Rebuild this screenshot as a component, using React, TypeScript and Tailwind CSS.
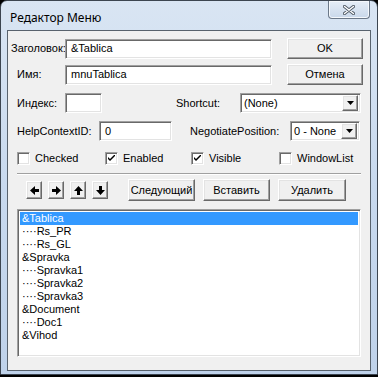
import React from "react";

const font = { fontFamily: '"Liberation Sans", Arial, sans-serif' };

const sunken =
  "border border-t-[#a0a0a0] border-l-[#a0a0a0] border-b-white border-r-white shadow-[inset_1px_1px_0_#696969,inset_-1px_-1px_0_#e3e3e3] bg-white";
const raised =
  "border border-t-white border-l-white border-b-[#696969] border-r-[#696969] shadow-[inset_-1px_-1px_0_#a0a0a0,inset_1px_1px_0_#e3e3e3] bg-[#f0f0f0]";

function TextBox({ w, value }: { w: string; value?: string }) {
  return (
    <div className={`${sunken} ${w} h-[20px] flex items-center pl-[5px] text-[11px] text-black`}>
      {value}
    </div>
  );
}

function Btn({ w, h, children }: { w: string; h: string; children: React.ReactNode }) {
  return (
    <div className={`${raised} ${w} ${h} flex items-center justify-center text-[11px] text-black`}>
      {children}
    </div>
  );
}

function Combo({ w, value }: { w: string; value: string }) {
  return (
    <div className={`${sunken} ${w} h-[20px] flex items-center pl-[3px] pr-[2px] text-[11px] text-black`}>
      <span className="flex-1">{value}</span>
      <div className={`${raised} w-[16px] h-[16px] flex items-center justify-center`}>
        <svg width="7" height="4" viewBox="0 0 7 4">
          <path d="M0 0h7L3.5 4z" fill="#000" />
        </svg>
      </div>
    </div>
  );
}

function Check({ checked, label, w }: { checked?: boolean; label: string; w: string }) {
  return (
    <div className={`flex items-center gap-[5px] ${w}`}>
      <div className={`${sunken} w-[13px] h-[13px] flex items-center justify-center`}>
        {checked && (
          <svg width="7" height="7" viewBox="0 0 7 7">
            <path d="M0 2l2 2 5-5v2l-5 5-2-2z" fill="#000" />
          </svg>
        )}
      </div>
      <span className="text-[11px] text-black">{label}</span>
    </div>
  );
}

function Arrow({ dir }: { dir: "l" | "r" | "u" | "d" }) {
  const rot = { l: "rotate-180", r: "", u: "-rotate-90", d: "rotate-90" }[dir];
  return (
    <div className={`${raised} w-[16px] h-[18px] flex items-center justify-center`}>
      <svg width="9" height="9" viewBox="0 0 9 9" className={rot}>
        <path d="M0 3h4V0l5 4.5L4 9V6H0z" fill="#000" />
      </svg>
    </div>
  );
}

const items = [
  "&Tablica",
  "····Rs_PR",
  "····Rs_GL",
  "&Spravka",
  "····Spravka1",
  "····Spravka2",
  "····Spravka3",
  "&Document",
  "····Doc1",
  "&Vihod",
];

export default function App() {
  return (
    <div className="w-[378px] h-[377px] bg-black" style={font}>
      <div className="w-[378px] h-[375px] rounded-t-[7px] border border-[#3c4550] bg-gradient-to-b from-[#d9e5f3] via-[#c8d9ee] to-[#bfd2ea] flex flex-col">
        {/* title bar */}
        <div className="h-[29px] flex items-start relative">
          <span className="mt-[8px] ml-[9px] text-[12px] text-black" style={{ fontFamily: '"Noto Sans", "Open Sans", sans-serif' }}>
            Редактор Меню
          </span>
          <div className="ml-auto mr-[7px] w-[42px] h-[18px] rounded-b-[4px] border border-t-0 border-[#6b7888] bg-gradient-to-b from-[#e6eef7] to-[#c9d8ea] flex items-center justify-center shadow-[inset_0_0_0_1px_#f4f8fc]">
            <svg width="12" height="10" viewBox="0 0 12 10">
              <path d="M1.5 1.5l9 7M10.5 1.5l-9 7" stroke="#4f5a66" strokeWidth="3.2" strokeLinecap="round" />
              <path d="M1.5 1.5l9 7M10.5 1.5l-9 7" stroke="#ffffff" strokeWidth="1.4" strokeLinecap="round" />
            </svg>
          </div>
        </div>

        {/* client */}
        <div className="mx-[6px] w-[364px] h-[341px] border border-[#58626d] bg-[#f0f0f0] text-[11px] text-black">
          <div className="pt-[7px] pl-[3px] flex flex-col">
            <div className="flex items-center h-[21px]">
              <span className="w-[54px]">Заголовок:</span>
              <TextBox w="w-[207px]" value="&Tablica" />
              <div className="ml-[15px]">
                <Btn w="w-[76px]" h="h-[21px]">OK</Btn>
              </div>
            </div>
            <div className="flex items-center h-[21px] mt-[5px]">
              <span className="w-[54px] pl-[6px]">Имя:</span>
              <TextBox w="w-[207px]" value="mnuTablica" />
              <div className="ml-[15px]">
                <Btn w="w-[76px]" h="h-[21px]">Отмена</Btn>
              </div>
            </div>
            <div className="flex items-center h-[20px] mt-[8px]">
              <span className="w-[54px] pl-[6px]">Индекс:</span>
              <TextBox w="w-[37px]" />
              <span className="ml-[74px] w-[64px]">Shortcut:</span>
              <Combo w="w-[121px]" value="(None)" />
            </div>
            <div className="flex items-center h-[20px] mt-[8px]">
              <span className="w-[88px] pl-[6px]">HelpContextID:</span>
              <TextBox w="w-[73px]" value="0" />
              <span className="ml-[18px] w-[100px]">NegotiatePosition:</span>
              <Combo w="w-[70px]" value="0 - None" />
            </div>
            <div className="flex items-center h-[13px] mt-[11px] pl-[6px]">
              <Check label="Checked" w="w-[88px]" />
              <Check label="Enabled" checked w="w-[86px]" />
              <Check label="Visible" checked w="w-[88px]" />
              <Check label="WindowList" w="w-[80px]" />
            </div>
            <div className="ml-[6px] mt-[8px] w-[344px] h-[2px] border-t border-t-[#a0a0a0] border-b border-b-white" />
            <div className="flex items-center h-[22px] mt-[4px] pl-[15px]">
              <div className="flex gap-[6px]">
                <Arrow dir="l" />
                <Arrow dir="r" />
                <Arrow dir="u" />
                <Arrow dir="d" />
              </div>
              <div className="ml-[20px] flex gap-[8px]">
                <Btn w="w-[67px]" h="h-[22px]">Следующий</Btn>
                <Btn w="w-[67px]" h="h-[22px]">Вставить</Btn>
                <Btn w="w-[68px]" h="h-[22px]">Удалить</Btn>
              </div>
            </div>
            <div className={`${sunken} ml-[6px] mt-[8px] w-[344px] h-[148px] p-[2px]`}>
              {items.map((t, i) => (
                <div
                  key={t}
                  className={`h-[13px] leading-[13px] pl-[2px] text-[11px] ${i === 0 ? "bg-[#3399ff] text-white" : "text-black"}`}
                >
                  {t}
                </div>
              ))}
            </div>
          </div>
        </div>
      </div>
    </div>
  );
}
